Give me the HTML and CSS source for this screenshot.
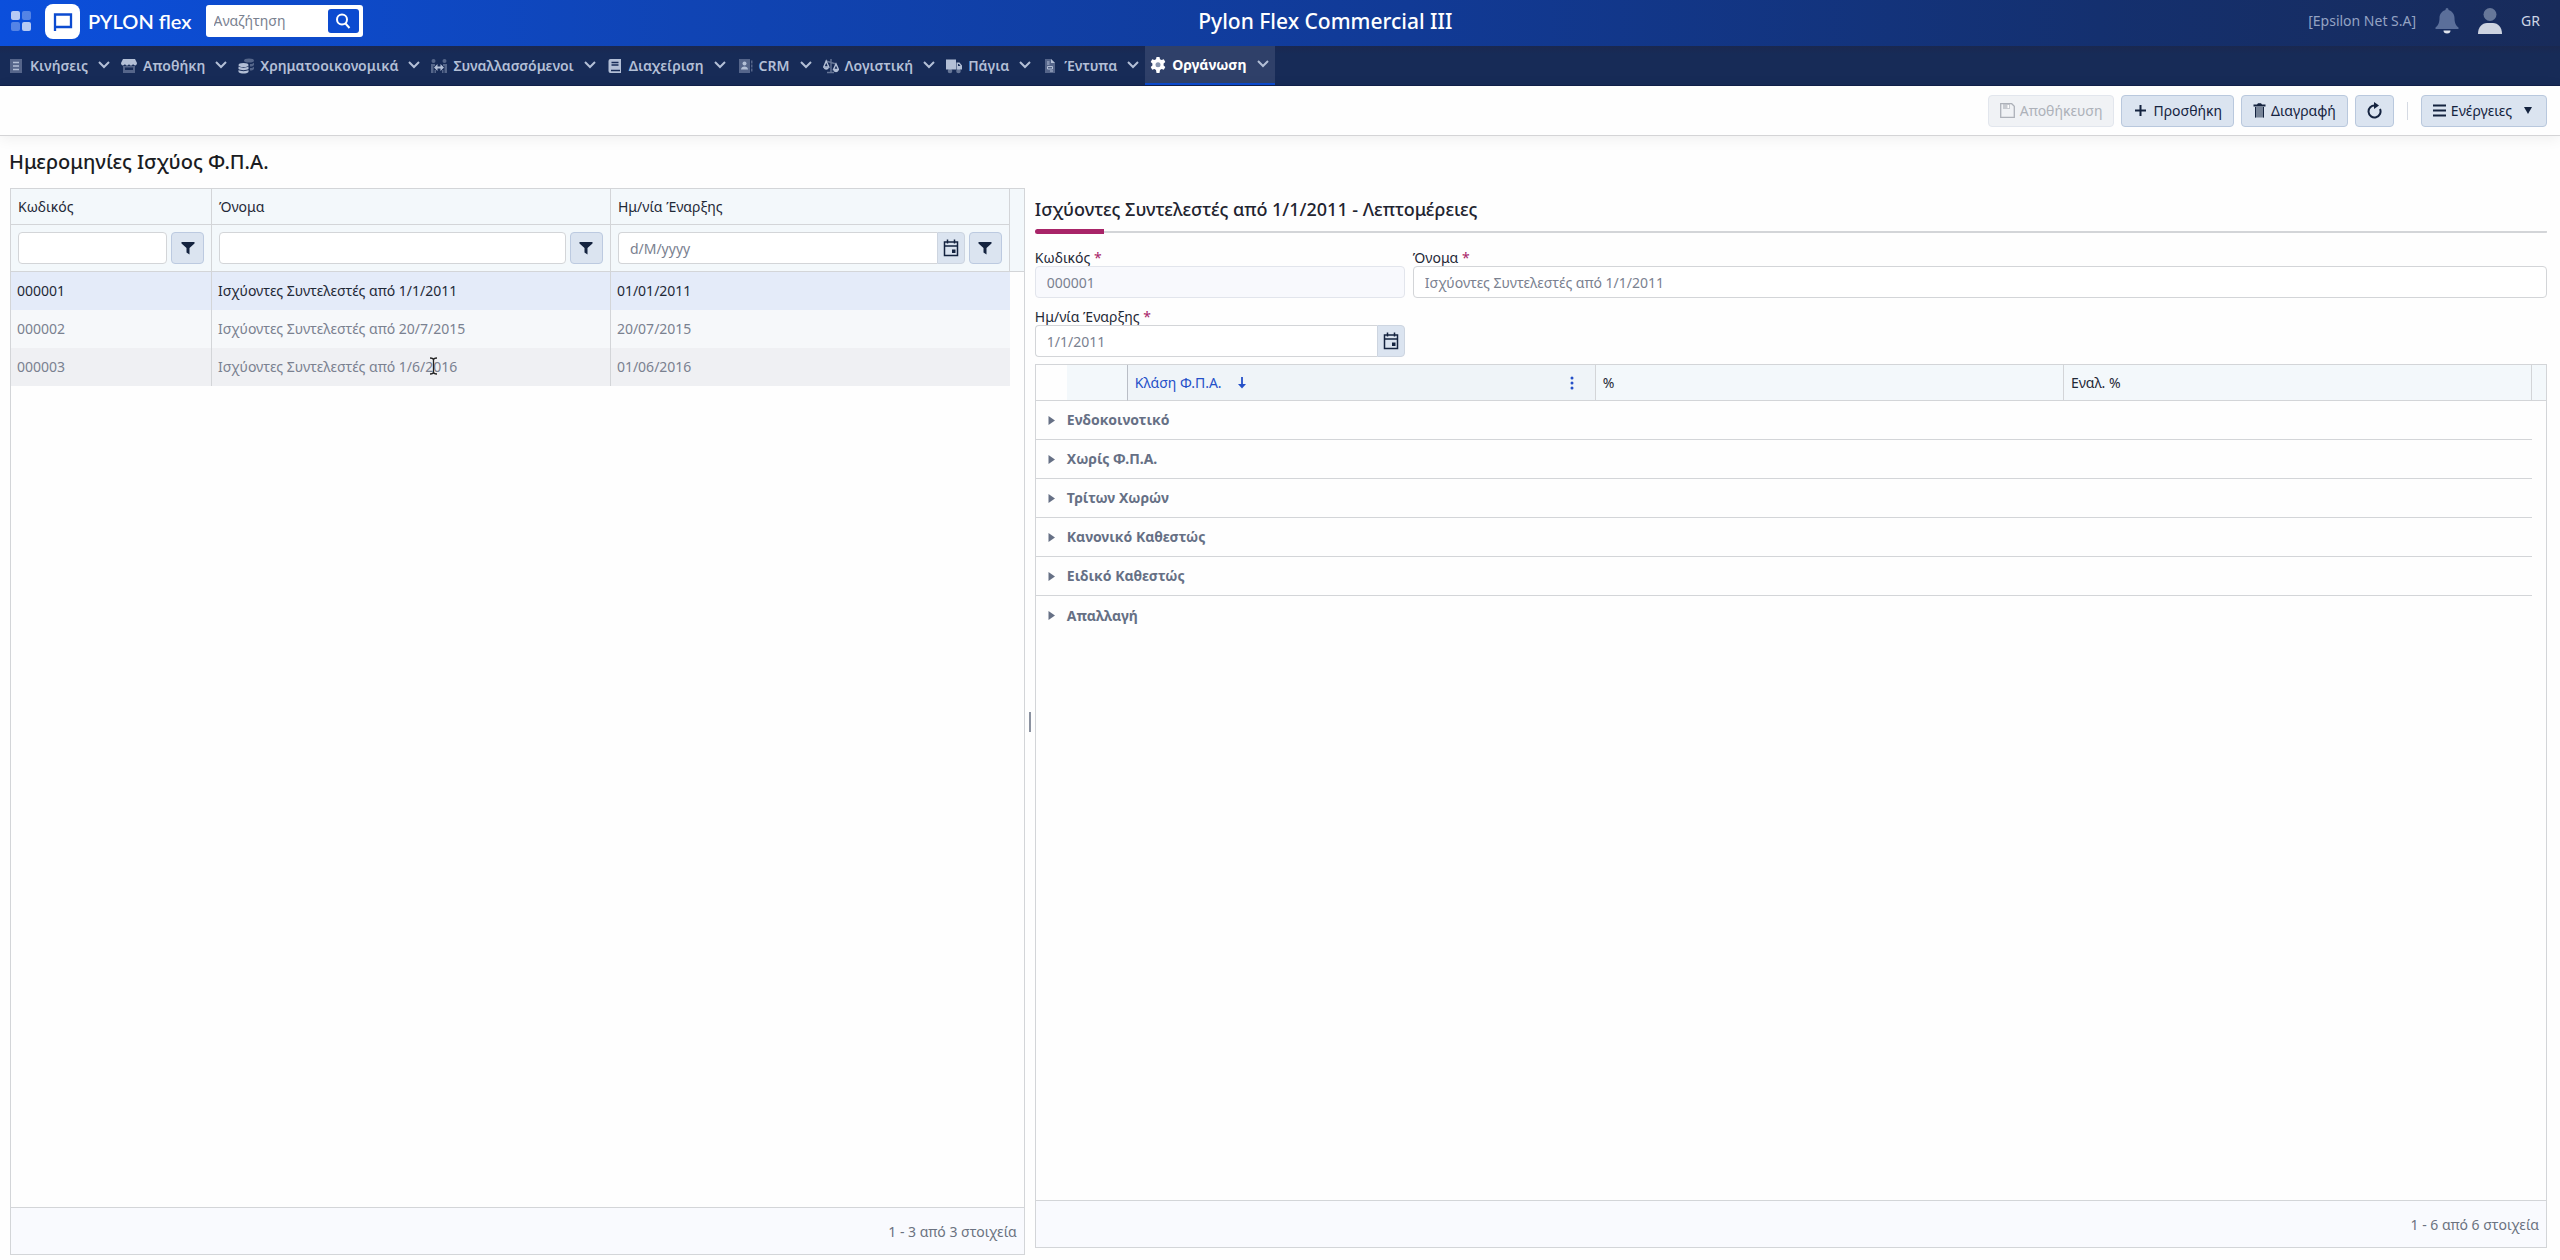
FILE: index.html
```
<!DOCTYPE html>
<html lang="el">
<head>
    <meta charset="UTF-8">
    <meta name="viewport" content="width=device-width, initial-scale=1.0">
    <title>Pylon Flex Commercial III</title>
    <link rel="stylesheet" href="styles.css">
</head>
<body>
    <!-- Shared icons -->
    <svg class="sprite" aria-hidden="true">
        <symbol id="chevron" viewBox="0 0 12 12"><path d="M1 3l5 5 5-5" fill="none" stroke="currentColor" stroke-width="2"/></symbol>
        <symbol id="filter" viewBox="0 0 14 14"><path d="M.500 1h13v1.500L8.500 7v6.500l-3-2V7l-5-4.500z" fill="currentColor"/></symbol>
        <symbol id="calendar" viewBox="0 0 16 18"><path d="M1.500 3h13v13.500h-13zM1.500 7h13M4.500.500v4M11.500.500v4" fill="none" stroke="currentColor" stroke-width="1.500"/><path d="M9 10.500h3.500V14H9z" fill="currentColor"/></symbol>
        <symbol id="caret" viewBox="0 0 7 9"><path d="M.500 0L7 4.500.500 9z" fill="currentColor"/></symbol>
    </svg>

    <header class="topbar">
        <div class="brand">
            <button type="button" class="icon-btn" aria-label="Εφαρμογές">
                <svg width="20" height="20" viewBox="0 0 20 20" fill="#fff"><rect width="9" height="9" rx="2" opacity=".7"/><rect x="11" width="9" height="9" rx="2" opacity=".3"/><rect y="11" width="9" height="9" rx="2" opacity=".3"/><rect x="11" y="11" width="9" height="9" rx="2" opacity=".7"/></svg>
            </button>
            <a href="#" class="logo">
                <svg width="35" height="35" viewBox="0 0 35 35"><rect width="35" height="35" rx="8" fill="#fff"/><path d="M10 27V10.500h16v12.500H11" fill="none" stroke="#0c4bd0" stroke-width="2.300"/></svg>
                <span>PYLON flex</span>
            </a>
            <form class="search">
                <input type="text" placeholder="Αναζήτηση" aria-label="Αναζήτηση">
                <button type="button" aria-label="Εύρεση">
                    <svg width="16" height="16" viewBox="0 0 16 16" fill="none" stroke="#fff" stroke-width="2"><circle cx="7" cy="6.500" r="5"/><path d="M10.500 10.500l4 4.500"/></svg>
                </button>
            </form>
        </div>
        <div class="app-name">Pylon Flex Commercial III</div>
        <div class="user">
            <span class="company">[Epsilon Net S.A]</span>
            <button type="button" class="icon-btn" aria-label="Ειδοποιήσεις">
                <svg width="24" height="26" viewBox="0 0 24 26"><path d="M12 0c1 0 1.500.700 1.500 2C17 3 19.500 6 19.500 10c0 5 1.500 7.500 4 9.500V21H.500v-1.500c2.500-2 4-4.500 4-9.500 0-4 2.500-7 6-8 0-1.300.500-2 1.500-2z" fill="#5b6f9a"/><path d="M8.500 22.500h7a3.500 3 0 0 1-7 0z" fill="#dfe3ec"/></svg>
            </button>
            <button type="button" class="icon-btn" aria-label="Χρήστης">
                <svg width="24" height="26" viewBox="0 0 24 26"><circle cx="12" cy="6.500" r="6.500" fill="#667799"/><path d="M0 26c0-7 4-11 9-11h6c5 0 9 4 9 11z" fill="#cdd3e0"/></svg>
            </button>
            <button type="button" class="icon-btn">GR</button>
        </div>
    </header>

    <nav class="menu">
        <button type="button" class="menu-item">
            <svg class="menu-icon" viewBox="0 0 16 16"><path d="M2 1h12v14H2z" fill="currentColor" opacity=".4"/><path d="M5 4.500h6M5 8h6M5 11.500h6" stroke="currentColor" stroke-width="1.400"/></svg>
            Κινήσεις<svg class="chevron"><use href="#chevron"/></svg>
        </button>
        <button type="button" class="menu-item">
            <svg class="menu-icon" viewBox="0 0 16 16" fill="currentColor"><path d="M2 1h12l2 4c0 3-3 3-4 1-1 2-3 2-4 0-1 2-3 2-4 0-1 2-4 2-4-1z"/><path d="M2 8h12v7H2zM4 9.500V12h8V9.500z" opacity=".4" fill-rule="evenodd"/></svg>
            Αποθήκη<svg class="chevron"><use href="#chevron"/></svg>
        </button>
        <button type="button" class="menu-item">
            <svg class="menu-icon" viewBox="0 0 16 16" fill="currentColor"><g opacity=".4"><ellipse cx="11" cy="2.500" rx="5" ry="2"/><path d="M12 6c2 0 3-.500 4-1.500V7c-1 1-2 1.500-4 1.500zM12 10c2 0 3-.500 4-1.500V11c-1 1-2 1.500-4 1.500z"/></g><ellipse cx="5.500" cy="7" rx="5" ry="2"/><path d="M.500 8.500c2 1.500 8 1.500 10 0V11c-2 1.500-8 1.500-10 0zM.500 12c2 1.500 8 1.500 10 0v2c-2 2-8 2-10 0z"/></svg>
            Χρηματοοικονομικά<svg class="chevron"><use href="#chevron"/></svg>
        </button>
        <button type="button" class="menu-item">
            <svg class="menu-icon" viewBox="0 0 16 16" fill="currentColor"><g opacity=".4"><circle cx="2.500" cy="3" r="2"/><circle cx="13.500" cy="3" r="2"/><path d="M0 6h4v2H2.500v7H0zM16 6h-4v2h1.500v7H16zM3.500 12h1.500v3H3.500zM11 12h1.500v3H11z"/></g><path d="M3 9.500L6.500 6v2.500h3V6L13 9.500 9.500 13v-2.500h-3V13z"/></svg>
            Συναλλασσόμενοι<svg class="chevron"><use href="#chevron"/></svg>
        </button>
        <button type="button" class="menu-item">
            <svg class="menu-icon" viewBox="0 0 16 16"><path d="M3.500 1H14v14H3.500A2 2 0 0 1 1.500 13V3a2 2 0 0 1 2-2z" fill="currentColor"/><path d="M4.500 4.500h7M4.500 7h7M4 12.500h9" stroke="#172b57" stroke-width="1.300"/></svg>
            Διαχείριση<svg class="chevron"><use href="#chevron"/></svg>
        </button>
        <button type="button" class="menu-item">
            <svg class="menu-icon" viewBox="0 0 16 16" fill="currentColor"><path d="M2 1h11v14H2zM14 2.500h1.500v3H14zM14 6.500h1.500v3H14zM14 10.500h1.500v3H14z" opacity=".4"/><circle cx="7.500" cy="5.500" r="2"/><path d="M4 11.500c0-4 7-4 7 0z"/></svg>
            CRM<svg class="chevron"><use href="#chevron"/></svg>
        </button>
        <button type="button" class="menu-item">
            <svg class="menu-icon" viewBox="0 0 16 16" fill="none" stroke="currentColor" stroke-width="1.400"><path d="M3 3l10 3M8 1v13M4 14.500h7" opacity=".5"/><path d="M3.200 3L.800 9h5zM13 6l-2.500 5.500h5z"/><path d="M.500 9.500c1 3 4.500 3 5.500 0zM10.300 12c1 3 4.500 3 5.300 0z" fill="currentColor" stroke="none"/></svg>
            Λογιστική<svg class="chevron"><use href="#chevron"/></svg>
        </button>
        <button type="button" class="menu-item">
            <svg class="menu-icon" viewBox="0 0 16 16" fill="currentColor"><path d="M0 1.500h10v10H0zM10.500 4.500h3L16 7.500v4h-5.500zM12 6v2h2.500L13 6z" fill-rule="evenodd"/><g opacity=".5"><circle cx="4" cy="13" r="2.300"/><circle cx="12.500" cy="13" r="2.300"/></g></svg>
            Πάγια<svg class="chevron"><use href="#chevron"/></svg>
        </button>
        <button type="button" class="menu-item">
            <svg class="menu-icon" viewBox="0 0 16 16"><path d="M3 1h6l4 4v10H3z" fill="currentColor" opacity=".4"/><path d="M9 1l4 4H9z" fill="currentColor"/><path d="M5 4h2.500M5 6h2.500M5.500 8.500h5v2.500h-5zM8 13h3" fill="none" stroke="currentColor"/></svg>
            Έντυπα<svg class="chevron"><use href="#chevron"/></svg>
        </button>
        <button type="button" class="menu-item active">
            <svg class="menu-icon" viewBox="0 0 16 16"><path d="M6.500 0h3l.500 2.200 1.600.900 2.200-.800 1.500 2.700-1.700 1.500v2l1.700 1.500-1.500 2.700-2.200-.700-1.600.900L9.500 16h-3L6 12.900l-1.600-.900-2.200.700L.700 10l1.700-1.500v-2L.700 5l1.500-2.700 2.200.800L6 2.200z" fill="#fff"/><circle cx="8" cy="7.800" r="2.500" fill="#8794ae"/></svg>
            Οργάνωση<svg class="chevron"><use href="#chevron"/></svg>
        </button>
    </nav>

    <div class="toolbar">
        <button type="button" class="btn" disabled>
            <svg width="15" height="15" viewBox="0 0 15 15"><path d="M.700.700h11l2.600 2.600v11H.700z" fill="none" stroke="currentColor" stroke-width="1.300"/><path d="M3 1h7v5H3z" fill="currentColor" opacity=".6"/><path d="M7.500 2h1.500v3H7.500z" fill="#fff"/></svg>
            Αποθήκευση
        </button>
        <button type="button" class="btn">
            <svg width="15" height="15" viewBox="0 0 15 15"><path d="M7.500 2v11M2 7.500h11" stroke="currentColor" stroke-width="2"/></svg>
            Προσθήκη
        </button>
        <button type="button" class="btn">
            <svg width="13" height="15" viewBox="0 0 13 15"><path d="M2 4h9v10.500H2z" fill="currentColor" opacity=".5"/><path d="M.500 1.500h3.500L5 .300h3l1 1.200h3.500v2H.500z" fill="currentColor"/><path d="M2 4h1v10.500H2zM10 4h1v10.500h-1z" fill="currentColor"/></svg>
            Διαγραφή
        </button>
        <button type="button" class="btn" aria-label="Ανανέωση">
            <svg width="15" height="17" viewBox="0 0 15 17"><path d="M8 3.500A6 6 0 1 0 13 7" fill="none" stroke="currentColor" stroke-width="2"/><path d="M7 0l5 3.500L7 7z" fill="currentColor"/></svg>
        </button>
        <span class="divider"></span>
        <button type="button" class="btn">
            <svg width="13" height="13" viewBox="0 0 13 13"><path d="M0 1.500h13M0 6.500h13M0 11.500h13" stroke="currentColor" stroke-width="1.800"/></svg>
            Ενέργειες
            <svg class="drop" width="8" height="7" viewBox="0 0 8 7"><path d="M0 0h8L4 7z" fill="currentColor"/></svg>
        </button>
    </div>

    <h1>Ημερομηνίες Ισχύος Φ.Π.Α.</h1>

    <main class="split">
        <section class="grid list">
            <table>
                <colgroup><col class="col-code"><col><col><col class="col-gutter"></colgroup>
                <thead>
                    <tr>
                        <th>Κωδικός</th>
                        <th>Όνομα</th>
                        <th>Ημ/νία Έναρξης</th>
                        <th rowspan="2"></th>
                    </tr>
                    <tr class="filters">
                        <th>
                            <div class="filter">
                                <input type="text" aria-label="Κωδικός">
                                <button type="button" aria-label="Φίλτρο"><svg width="14" height="14"><use href="#filter"/></svg></button>
                            </div>
                        </th>
                        <th>
                            <div class="filter">
                                <input type="text" aria-label="Όνομα">
                                <button type="button" aria-label="Φίλτρο"><svg width="14" height="14"><use href="#filter"/></svg></button>
                            </div>
                        </th>
                        <th>
                            <div class="filter">
                                <div class="date">
                                    <input type="text" placeholder="d/M/yyyy" aria-label="Ημ/νία Έναρξης">
                                    <button type="button" aria-label="Ημερολόγιο"><svg width="16" height="18"><use href="#calendar"/></svg></button>
                                </div>
                                <button type="button" aria-label="Φίλτρο"><svg width="14" height="14"><use href="#filter"/></svg></button>
                            </div>
                        </th>
                    </tr>
                </thead>
                <tbody>
                    <tr class="selected"><td>000001</td><td>Ισχύοντες Συντελεστές από 1/1/2011</td><td>01/01/2011</td><td></td></tr>
                    <tr><td>000002</td><td>Ισχύοντες Συντελεστές από 20/7/2015</td><td>20/07/2015</td><td></td></tr>
                    <tr class="hover"><td>000003</td><td>Ισχύοντες Συντελεστές από 1/6/<svg class="cursor" width="9" height="18" viewBox="0 0 9 18"><path d="M1 1c2 0 3.500.500 3.500 2v12c0 1.500-1.500 2-3.500 2M8 1c-2 0-3.500.500-3.500 2M8 17c-2 0-3.500-.500-3.500-2" fill="none" stroke="#222" stroke-width="1.300"/></svg>2016</td><td>01/06/2016</td><td></td></tr>
                </tbody>
            </table>
            <div class="pager">1 - 3 από 3 στοιχεία</div>
        </section>

        <div class="splitter"><span></span></div>

        <section class="details">
            <h2>Ισχύοντες Συντελεστές από 1/1/2011 - Λεπτομέρειες</h2>
            <div class="rule"></div>
            <form class="fields">
                <div class="field">
                    <label for="code">Κωδικός <span>*</span></label>
                    <input type="text" id="code" value="000001" disabled>
                </div>
                <div class="field">
                    <label for="name">Όνομα <span>*</span></label>
                    <input type="text" id="name" value="Ισχύοντες Συντελεστές από 1/1/2011">
                </div>
                <div class="field">
                    <label for="start">Ημ/νία Έναρξης <span>*</span></label>
                    <div class="date">
                        <input type="text" id="start" value="1/1/2011">
                        <button type="button" aria-label="Ημερολόγιο"><svg width="16" height="18"><use href="#calendar"/></svg></button>
                    </div>
                </div>
            </form>
            <div class="grid">
                <table>
                    <colgroup><col class="col-toggle"><col class="col-indent"><col><col><col><col class="col-gutter"></colgroup>
                    <thead>
                        <tr>
                            <th class="blank"></th>
                            <th class="indent"></th>
                            <th class="sorted">
                                <div class="sort">
                                    Κλάση Φ.Π.Α.
                                    <svg width="8" height="12" viewBox="0 0 8 12"><path d="M4 0v9" stroke="currentColor" stroke-width="1.800"/><path d="M0 7h8l-4 4.500z" fill="currentColor"/></svg>
                                    <button type="button" class="more" aria-label="Μενού στήλης"><svg width="4" height="14" viewBox="0 0 4 14" fill="currentColor"><circle cx="2" cy="2" r="1.500"/><circle cx="2" cy="7" r="1.500"/><circle cx="2" cy="12" r="1.500"/></svg></button>
                                </div>
                            </th>
                            <th>%</th>
                            <th>Εναλ. %</th>
                            <th></th>
                        </tr>
                    </thead>
                    <tbody class="groups">
                        <tr><td colspan="5"><button type="button"><svg width="7" height="9"><use href="#caret"/></svg>Ενδοκοινοτικό</button></td><td></td></tr>
                        <tr><td colspan="5"><button type="button"><svg width="7" height="9"><use href="#caret"/></svg>Χωρίς Φ.Π.Α.</button></td><td></td></tr>
                        <tr><td colspan="5"><button type="button"><svg width="7" height="9"><use href="#caret"/></svg>Τρίτων Χωρών</button></td><td></td></tr>
                        <tr><td colspan="5"><button type="button"><svg width="7" height="9"><use href="#caret"/></svg>Κανονικό Καθεστώς</button></td><td></td></tr>
                        <tr><td colspan="5"><button type="button"><svg width="7" height="9"><use href="#caret"/></svg>Ειδικό Καθεστώς</button></td><td></td></tr>
                        <tr><td colspan="5"><button type="button"><svg width="7" height="9"><use href="#caret"/></svg>Απαλλαγή</button></td><td></td></tr>
                    </tbody>
                </table>
                <div class="pager">1 - 6 από 6 στοιχεία</div>
            </div>
        </section>
    </main>
</body>
</html>
```
FILE: styles.css
```
* {
    margin: 0;
    padding: 0;
    box-sizing: border-box;
}
body {
    display: flex;
    flex-direction: column;
    min-height: 100vh;
    padding-bottom: 5px;
    background: #fefefe;
    color: #1f2937;
    font-family: "Noto Sans", sans-serif;
    font-size: 14px;
    line-height: 20px;
}
button,
input {
    font: inherit;
    color: inherit;
}
button {
    border: none;
    background: none;
    cursor: pointer;
}
svg {
    flex: none;
}
.sprite {
    position: absolute;
    width: 0;
    height: 0;
}

/* Top bar */
.topbar {
    display: flex;
    align-items: center;
    height: 46px;
    padding: 0 20px 4px 11px;
    background: linear-gradient(90deg, #0b4fdc 0%, #1044b4 27%, #113a96 55%, #14306f 82%, #182b5a 100%);
    color: #fff;
}
.icon-btn {
    display: flex;
    color: #cdd5e6;
}
.brand {
    display: flex;
    align-items: center;
}
.logo {
    display: flex;
    align-items: center;
    gap: 8px;
    margin: 0 14px;
    color: #fff;
    font-family: Lato, sans-serif;
    font-size: 20px;
    font-weight: 600;
    text-decoration: none;
}
.search {
    display: flex;
    align-items: center;
    width: 157px;
    height: 32px;
    padding: 4px;
    border-radius: 3px;
    background: #fff;
}
.search input {
    flex: 1;
    min-width: 0;
    padding-left: 4px;
    border: none;
    background: none;
    outline: none;
}
.search button {
    display: flex;
    justify-content: center;
    align-items: center;
    width: 31px;
    height: 24px;
    border-radius: 3px;
    background: #0c4bd0;
}
.app-name {
    flex: 1;
    margin-right: 20px;
    font-size: 21px;
    font-weight: 500;
    text-align: center;
}
.user {
    display: flex;
    align-items: center;
    gap: 19px;
}
.company {
    color: #94a3c3;
}

/* Main menu */
.menu {
    display: flex;
    height: 40px;
    padding-left: 3px;
    border-bottom: 1px solid #11204a;
    background: linear-gradient(#1a2850, #172b57 8px);
}
.menu-item {
    display: flex;
    align-items: center;
    padding: 0 6px 0 5px;
    color: #b3bfd6;
    font-weight: 600;
}
.menu-icon {
    width: 16px;
    height: 16px;
    margin-right: 6px;
}
.chevron {
    width: 12px;
    height: 12px;
    margin: 0 0 2px 10px;
}
.menu-item.active {
    border-bottom: 2px solid #0c4bd0;
    background: #2f4069;
    color: #fff;
    font-weight: 700;
}
.active .chevron {
    color: #b3bfd6;
}

/* Toolbar */
.toolbar {
    display: flex;
    justify-content: flex-end;
    align-items: center;
    gap: 7px;
    height: 50px;
    padding: 0 13px;
    border-bottom: 1px solid #d4d4d6;
    box-shadow: 0 2px 14px rgba(0, 0, 0, 0.07);
}
.btn {
    display: flex;
    align-items: center;
    gap: 5px;
    height: 32px;
    padding: 0 11px;
    border: 1px solid #b9c8dd;
    border-radius: 4px;
    background: #dbe4f0;
    color: #14233f;
}
.btn:disabled {
    border-color: #e2e6ed;
    background: #f0f2f5;
    color: #adb1b9;
}
.drop {
    margin: 0 3px 0 7px;
}
.divider {
    width: 1px;
    height: 18px;
    margin: 0 6px;
    background: #d5dae3;
}
h1 {
    padding: 10px 9px;
    color: #1a1c22;
    font-size: 20px;
    font-weight: 500;
    line-height: 32px;
}

/* Two panes */
.split {
    flex: 1;
    display: flex;
    padding: 0 13px 0 10px;
}
.grid {
    display: flex;
    flex-direction: column;
    border: 1px solid #d3d5d8;
}
.list {
    flex: 0 0 40%;
}
table {
    width: 100%;
    border-spacing: 0;
    table-layout: fixed;
}
.col-code {
    width: 201px;
}
.col-gutter {
    width: 14px;
}
.col-toggle {
    width: 31px;
}
.col-indent {
    width: 61px;
}
th {
    height: 36px;
    padding: 0 7px;
    border-right: 1px solid #d3d5d8;
    border-bottom: 1px solid #d3d5d8;
    background: #f3f8fb;
    font-weight: 400;
    text-align: left;
}
th:last-child {
    border-right: none;
}
.filters th,
.filters th:last-child {
    height: 47px;
    border-right: 1px solid #d3d5d8;
}
.filter {
    display: flex;
    gap: 4px;
}
.filter input,
.field input {
    width: 100%;
    min-width: 0;
    height: 32px;
    padding: 0 11px;
    border: 1px solid #d3d5d8;
    border-radius: 4px;
    background: #fff;
    color: #7a8190;
}
input::placeholder {
    color: #7a8190;
}
.filter button,
.date button {
    display: flex;
    flex: none;
    justify-content: center;
    align-items: center;
    width: 33px;
    height: 32px;
    border: 1px solid #bccae0;
    border-radius: 4px;
    background: #dbe4f0;
    color: #14233f;
}
.date {
    display: flex;
    flex: 1;
}
.filter .date input,
.field .date input {
    border-right: none;
    border-radius: 4px 0 0 4px;
}
.filter .date button,
.field .date button {
    width: 28px;
    border-color: #cdd5e0;
    border-radius: 0 4px 4px 0;
}
.list td {
    height: 38px;
    padding: 0 6px;
    border-right: 1px solid #d3d5d8;
    background: #f6f8fa;
    color: #7a8190;
}
.list .selected td {
    background: #e4ebf9;
    color: #1f2937;
}
.list .hover td {
    background: #eff0f3;
}
.list td:nth-child(3) {
    border-right: none;
}
.list tr td:last-child {
    border-right: none;
    background: #fefefe;
}
.cursor {
    position: absolute;
    margin-left: 4px;
}
.pager {
    margin-top: auto;
    padding: 14px 7px 12px;
    border-top: 1px solid #d3d5d8;
    background: #f9fafe;
    color: #6b7280;
    text-align: right;
}
.splitter {
    display: flex;
    justify-content: center;
    align-items: center;
    width: 10px;
}
.splitter span {
    width: 2px;
    height: 20px;
    background: #8b92a0;
}

/* Details pane */
.details {
    flex: 1;
    display: flex;
    flex-direction: column;
    padding: 6px 0 7px;
}
h2 {
    color: #1f2430;
    font-size: 18px;
    font-weight: 500;
    line-height: 30px;
}
.rule {
    height: 5px;
    margin: 5px 0 15px;
    border-radius: 3px;
    background: linear-gradient(#a82468, #a82468) 0 0 / 69px 5px no-repeat,
        linear-gradient(#d3d5d8, #d3d5d8) 0 2px / 100% 2px no-repeat;
}
.fields {
    display: grid;
    grid-template-columns: 370px 1fr;
    gap: 10px 8px;
    margin-bottom: 7px;
}
.field label {
    display: block;
    line-height: 17px;
}
.field label span {
    color: #a82468;
}
.field input:disabled {
    border-color: #e2e5ec;
    background: #f8f9fd;
}
.details .grid {
    flex: 1;
}
.blank {
    border-right: none;
    background: #fefefe;
}
.indent {
    border-right-color: #b9bec6;
}
.sorted {
    background: #eff4f8;
    color: #2450c8;
}
.sort {
    display: flex;
    align-items: center;
    gap: 16px;
}
.more {
    display: flex;
    margin-left: auto;
    padding-right: 14px;
}
.groups td {
    height: 39px;
}
.groups td:first-child {
    border-bottom: 1px solid #d3d5d8;
}
.groups tr:last-child td {
    border-bottom: none;
}
.groups button {
    display: flex;
    align-items: center;
    gap: 12px;
    padding-left: 12px;
    color: #667085;
    font-weight: 700;
}
```
